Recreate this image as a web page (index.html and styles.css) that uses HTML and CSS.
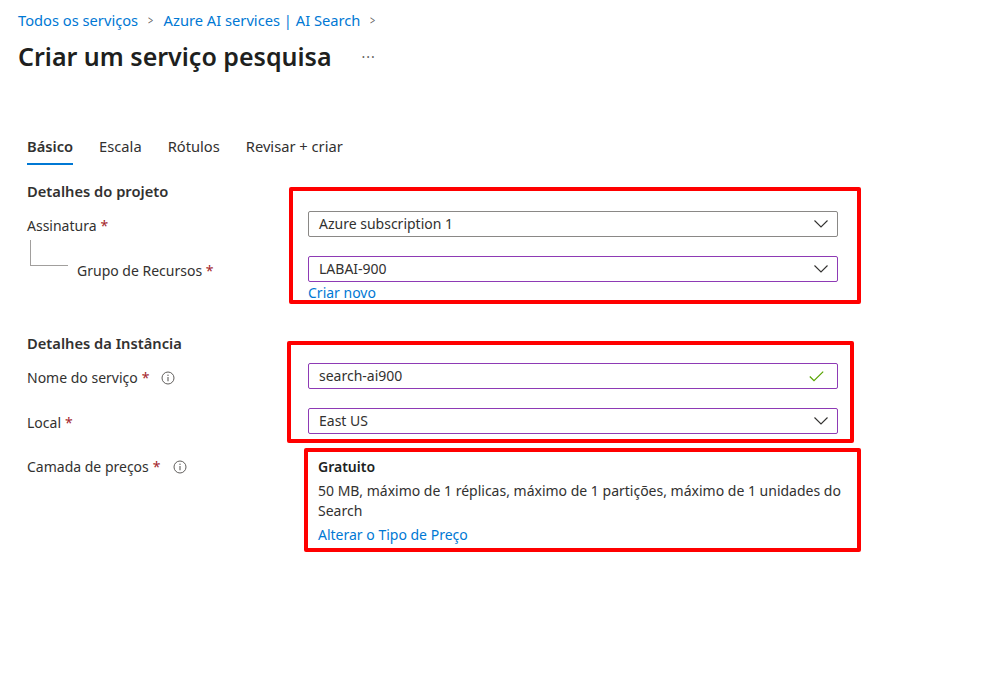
FILE: index.html
```html
<!DOCTYPE html>
<html lang="pt">
<head>
<meta charset="utf-8">
<link rel="stylesheet" href="styles.css">
</head>
<body>
<div class="page">
  <nav class="breadcrumb">
    <a class="crumb">Todos os serviços</a>
    <span class="sep">&gt;</span>
    <a class="crumb">Azure AI services | AI Search</a>
    <span class="sep">&gt;</span>
  </nav>
  <div class="titlebar">
    <h1 class="title">Criar um serviço pesquisa</h1>
    <span class="more">···</span>
  </div>

  <div class="tabs">
    <span class="tab active">Básico</span>
    <span class="tab">Escala</span>
    <span class="tab">Rótulos</span>
    <span class="tab">Revisar + criar</span>
  </div>

  <section class="section project">
    <h2 class="section-title">Detalhes do projeto</h2>
    <div class="row">
      <label class="label">Assinatura <span class="req">*</span></label>
      <div class="control">
        <div class="input neutral"><span>Azure subscription 1</span>
          <svg class="chev" width="14" height="8" viewBox="0 0 14 8"><path d="M0.5 0.5 L7 7 L13.5 0.5" fill="none" stroke="#323130" stroke-width="1.1"/></svg>
        </div>
      </div>
    </div>
    <div class="row row-sub">
      <div class="label sublabel">
        <span class="tree"></span>
        <span>Grupo de Recursos <span class="req">*</span></span>
      </div>
      <div class="control">
        <div class="input purple"><span>LABAI-900</span>
          <svg class="chev" width="14" height="8" viewBox="0 0 14 8"><path d="M0.5 0.5 L7 7 L13.5 0.5" fill="none" stroke="#323130" stroke-width="1.1"/></svg>
        </div>
        <a class="link create">Criar novo</a>
      </div>
    </div>
  </section>

  <section class="section instance">
    <h2 class="section-title">Detalhes da Instância</h2>
    <div class="row">
      <label class="label">Nome do serviço <span class="req">*</span>
        <svg class="info" width="14" height="14" viewBox="0 0 14 14"><circle cx="7" cy="7" r="6" fill="none" stroke="#605e5c" stroke-width="1"/><path d="M7 6 V10.3" stroke="#605e5c" stroke-width="1.1"/><circle cx="7" cy="4.2" r="0.7" fill="#605e5c"/></svg>
      </label>
      <div class="control">
        <div class="input purple"><span>search-ai900</span>
          <svg class="check" width="15" height="11" viewBox="0 0 15 11"><path d="M0.8 5.5 L5 9.7 L14.2 0.6" fill="none" stroke="#57a300" stroke-width="1.2"/></svg>
        </div>
      </div>
    </div>
    <div class="row row-local">
      <label class="label">Local <span class="req">*</span></label>
      <div class="control">
        <div class="input purple"><span>East US</span>
          <svg class="chev" width="14" height="8" viewBox="0 0 14 8"><path d="M0.5 0.5 L7 7 L13.5 0.5" fill="none" stroke="#323130" stroke-width="1.1"/></svg>
        </div>
      </div>
    </div>
    <div class="row row-price">
      <label class="label label-top">Camada de preços <span class="req">*</span>
        <svg class="info" width="14" height="14" viewBox="0 0 14 14"><circle cx="7" cy="7" r="6" fill="none" stroke="#605e5c" stroke-width="1"/><path d="M7 6 V10.3" stroke="#605e5c" stroke-width="1.1"/><circle cx="7" cy="4.2" r="0.7" fill="#605e5c"/></svg>
      </label>
      <div class="control">
        <div class="pricing">
          <div class="price-name">Gratuito</div>
          <div class="price-desc">50 MB, máximo de 1 réplicas, máximo de 1 partições, máximo de 1 unidades do Search</div>
          <a class="link">Alterar o Tipo de Preço</a>
        </div>
      </div>
    </div>
  </section>
</div>

<div class="mark mark-1"></div>
<div class="mark mark-2"></div>
<div class="mark mark-3"></div>
</body>
</html>
```

FILE: styles.css
```css
html, body {
  margin: 0;
  padding: 0;
  background: #ffffff;
}
body {
  font-family: "Noto Sans", "Liberation Sans", sans-serif;
  font-size: 14px;
  color: #323130;
  width: 1001px;
  height: 679px;
  position: relative;
  overflow: hidden;
}
.page {
  padding: 9px 0 0 18px;
}
.breadcrumb {
  display: flex;
  align-items: center;
  gap: 9px;
  height: 22px;
  line-height: 22px;
  font-size: 14.7px;
}
.crumb {
  color: #0078d4;
}
.sep {
  color: #605e5c;
  font-size: 13px;
  transform: scaleX(0.7);
}
.titlebar {
  display: flex;
  align-items: center;
  margin-top: 9px;
  height: 32px;
}
.title {
  margin: 0;
  font-size: 25px;
  font-weight: 600;
  line-height: 32px;
  color: #201f1e;
}
.more {
  margin-left: 30px;
  color: #605e5c;
  font-size: 14px;
  letter-spacing: 1px;
}
.tabs {
  display: flex;
  gap: 26px;
  margin: 63px 0 0 9px;
  font-size: 14.7px;
}
.tab {
  line-height: 22px;
  padding-bottom: 6px;
  border-bottom: 2px solid transparent;
}
.tab.active {
  font-weight: 600;
  border-bottom-color: #0078d4;
}
.section {
  padding-left: 9px;
}
.section-title {
  margin: 0;
  font-size: 14.7px;
  font-weight: 600;
  line-height: 20px;
}
.project {
  margin-top: 16px;
}
.instance {
  margin-top: 30px;
}
.row {
  display: grid;
  grid-template-columns: 281px 530px;
  margin-top: 10px;
}
.row-sub {
  margin-top: 19px;
}
.row-local {
  margin-top: 19px;
}
.row-price {
  margin-top: 19px;
}
.label {
  display: flex;
  align-items: flex-start;
  gap: 4px;
  height: 26px;
  box-sizing: border-box;
  padding-top: 5px;
  line-height: 20px;
}
.label-top {
  padding-top: 4px;
}
.label .info {
  margin-left: 8px;
  margin-top: 3px;
}
.req {
  color: #a4262c;
}
.sublabel {
  position: relative;
  padding-left: 50px;
}
.tree {
  position: absolute;
  left: 3px;
  top: -16px;
  width: 37px;
  height: 25px;
  border-left: 1px solid #a19f9d;
  border-bottom: 1px solid #a19f9d;
}
.control {
  display: flex;
  flex-direction: column;
}
.input {
  box-sizing: border-box;
  height: 26px;
  border: 1px solid #8a8886;
  border-radius: 2px;
  display: flex;
  align-items: center;
  justify-content: space-between;
  padding: 0 9px 0 10px;
  line-height: 20px;
}
.input.purple {
  border-color: #8e3ab5;
}
.check {
  margin-right: 4px;
}
.link {
  color: #0078d4;
  line-height: 20px;
}
.create {
  margin-top: 1px;
}
.pricing {
  margin-top: 4px;
  padding-left: 10px;
  border-left: 2px solid #8f8f00;
  margin-left: -2px;
  line-height: 20px;
}
.price-name {
  font-weight: 600;
  color: #201f1e;
}
.price-desc {
  margin-top: 4px;
  width: 526px;
}
.pricing .link {
  display: block;
  margin-top: 4px;
}
.mark {
  position: absolute;
  border: 4px solid #ff0000;
  border-radius: 2px;
  box-sizing: border-box;
  pointer-events: none;
}
.mark-1 {
  left: 289px;
  top: 187px;
  width: 572px;
  height: 117px;
}
.mark-2 {
  left: 287px;
  top: 341px;
  width: 567px;
  height: 102px;
}
.mark-3 {
  left: 304px;
  top: 448px;
  width: 557px;
  height: 104px;
}
```
